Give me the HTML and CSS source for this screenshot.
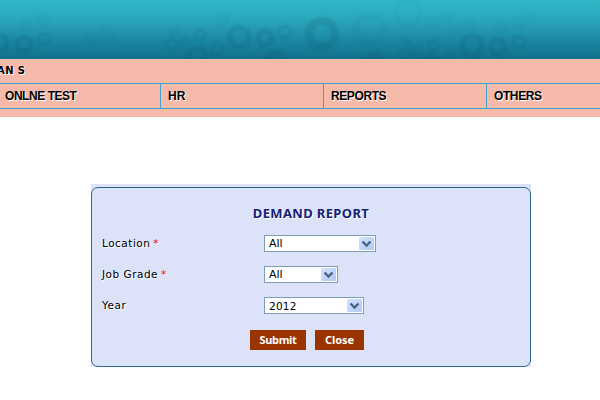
FILE: index.html
```html
<!DOCTYPE html>
<html lang="en">
<head>
<meta charset="utf-8">
<title>Demand Report</title>
<link rel="stylesheet" href="styles.css">
</head>
<body>
<header class="banner">
  <svg class="bubbles" width="600" height="59" viewBox="0 0 600 59" aria-hidden="true">
    <g fill="none" stroke="#0b5670">
      <g stroke-width="5" opacity=".19">
        <circle cx="-1" cy="43" r="8"/><circle cx="24" cy="44" r="7"/>
        <circle cx="239" cy="37" r="9.5"/><circle cx="265" cy="38" r="7"/>
        <circle cx="322" cy="34" r="13" stroke-width="8"/>
        <circle cx="197" cy="56" r="8"/><circle cx="275" cy="62" r="9"/>
        <circle cx="472" cy="46" r="10"/><circle cx="498" cy="47" r="7"/>
        <circle cx="373" cy="65" r="10"/><circle cx="430" cy="64" r="8"/>
      </g>
      <g stroke-width="3" opacity=".15">
        <circle cx="44" cy="39" r="5.5"/><circle cx="172" cy="44" r="5"/>
        <circle cx="185" cy="41" r="4"/><circle cx="200" cy="35" r="5"/>
        <circle cx="174" cy="32" r="3" stroke-width="2"/><circle cx="217" cy="49" r="6"/>
        <circle cx="285" cy="32" r="6"/><circle cx="405" cy="54" r="5"/>
        <circle cx="418" cy="51" r="4"/><circle cx="433" cy="45" r="5"/>
        <circle cx="407" cy="42" r="3" stroke-width="2"/><circle cx="450" cy="59" r="6"/>
        <circle cx="519" cy="42" r="6"/>
      </g>
      <g stroke-width="3" opacity=".05">
        <circle cx="26" cy="24" r="5"/><circle cx="43" cy="20" r="5"/>
        <circle cx="223" cy="20" r="5"/><circle cx="432" cy="23" r="5"/>
        <circle cx="446" cy="19" r="4"/><circle cx="457" cy="29" r="5"/>
        <circle cx="471" cy="25" r="4"/><circle cx="501" cy="27" r="5"/>
        <circle cx="518" cy="23" r="5"/><circle cx="531" cy="19" r="4"/>
        <circle cx="369" cy="29" r="14" stroke-width="6"/><circle cx="408" cy="14" r="12"/>
        <circle cx="91" cy="38" r="5"/><circle cx="107" cy="34" r="7"/>
      </g>
    </g>
  </svg>
</header>
<div class="strip">
  <div class="user"><span>AN S</span></div>
  <nav class="menu">
    <a class="item first">ONLNE TEST</a>
    <a class="item">HR</a>
    <a class="item reports">REPORTS</a>
    <a class="item others">OTHERS</a>
  </nav>
</div>
<main class="panel">
  <form class="form">
    <h1 class="title">DEMAND REPORT</h1>
    <div class="row">
      <span class="label">Location <b class="req">*</b></span>
      <div class="select wide"><span class="value">All</span><span class="arrow"><svg width="15" height="13" viewBox="0 0 15 13"><path d="M3.5 4.5 7.5 8.5 11.5 4.5"/></svg></span></div>
    </div>
    <div class="row">
      <span class="label">Job Grade <b class="req">*</b></span>
      <div class="select small"><span class="value">All</span><span class="arrow"><svg width="15" height="13" viewBox="0 0 15 13"><path d="M3.5 4.5 7.5 8.5 11.5 4.5"/></svg></span></div>
    </div>
    <div class="row">
      <span class="label">Year</span>
      <div class="select medium"><span class="value year">2012</span><span class="arrow"><svg width="15" height="13" viewBox="0 0 15 13"><path d="M3.5 4.5 7.5 8.5 11.5 4.5"/></svg></span></div>
    </div>
    <div class="actions">
      <button type="button" class="btn submit">Submit</button>
      <button type="button" class="btn close">Close</button>
    </div>
  </form>
</main>
</body>
</html>
```
FILE: styles.css
```css
* { box-sizing: border-box; }
body {
  margin: 0;
  width: 600px;
  height: 400px;
  overflow: hidden;
  background: #fff;
  color: #000;
  font-family: "DejaVu Sans", sans-serif;
  font-size: 11px;
}
.banner {
  height: 59px;
  overflow: hidden;
  background: linear-gradient(#30b6c6 0, #2eb0c2 10px, #279fb5 25px, #1b88a3 40px, #11708c 59px);
}
.bubbles { display: block; filter: blur(0.8px); }
.strip {
  height: 58px;
  background: #f5baaa;
  text-shadow: 1px 1px 0 #fff;
}
.user {
  height: 24px;
  line-height: 23px;
  font-weight: bold;
  font-size: 10px;
  letter-spacing: 0.4px;
}
.user span { margin-left: -3px; }
.menu {
  display: grid;
  grid-template-columns: 160px 163px 163px 114px;
  height: 26px;
  border-top: 1px solid #43a3cf;
  border-bottom: 1px solid #43a3cf;
  font: bold 12px/24px "Liberation Sans", sans-serif;
}
.item {
  padding-left: 7px;
  border-left: 1px solid #43a3cf;
  white-space: nowrap;
}
.first { padding-left: 5px; border-left: 0; letter-spacing: -0.45px; }
.reports, .others { letter-spacing: -0.4px; }
.panel {
  width: 440px;
  height: 183px;
  margin: 67px 0 0 91px;
  padding-top: 3px;
  background: #dce3f8;
}
.form {
  height: 180px;
  padding: 17px 10px 0;
  border: 1px solid #2c679f;
  border-radius: 7px;
  text-shadow: 1px 1px 0 #fff;
}
.title {
  margin: 0 0 13px;
  height: 17px;
  line-height: 17px;
  text-align: center;
  font-family: "Noto Sans", sans-serif;
  font-size: 13px;
  font-weight: bold;
  letter-spacing: 0.35px;
  color: #172378;
}
.row {
  display: flex;
  height: 17px;
  margin-bottom: 14px;
}
.label { width: 162px; font-size: 10.5px; line-height: 17px; letter-spacing: 0.5px; }
.label .req { margin-left: -1px; }
.req { color: #f00; font-weight: normal; }
.select {
  display: flex;
  align-items: center;
  justify-content: space-between;
  height: 17px;
  padding: 0 1px 0 4px;
  border: 1px solid #7f9db9;
  background: #fff;
  text-shadow: none;
}
.wide { width: 112px; }
.small { width: 74px; }
.medium { width: 100px; }
.year { font-size: 10.5px; letter-spacing: 0.2px; }
.arrow {
  width: 15px;
  height: 13px;
  border-radius: 1px;
  background: linear-gradient(135deg, #d5e2ff, #afc8f7);
}
.arrow svg { display: block; }
.arrow path { fill: none; stroke: #4d6185; stroke-width: 2.4; }
.actions {
  display: flex;
  gap: 9px;
  margin: 16px 0 0 148px;
}
.btn {
  height: 20px;
  padding: 0;
  border: 0;
  background: #993300;
  color: #fff;
  font: bold 11px/20px "Noto Sans", sans-serif;
  letter-spacing: -0.35px;
}
.submit { width: 56px; }
.close { width: 49px; letter-spacing: -0.1px; }
```
